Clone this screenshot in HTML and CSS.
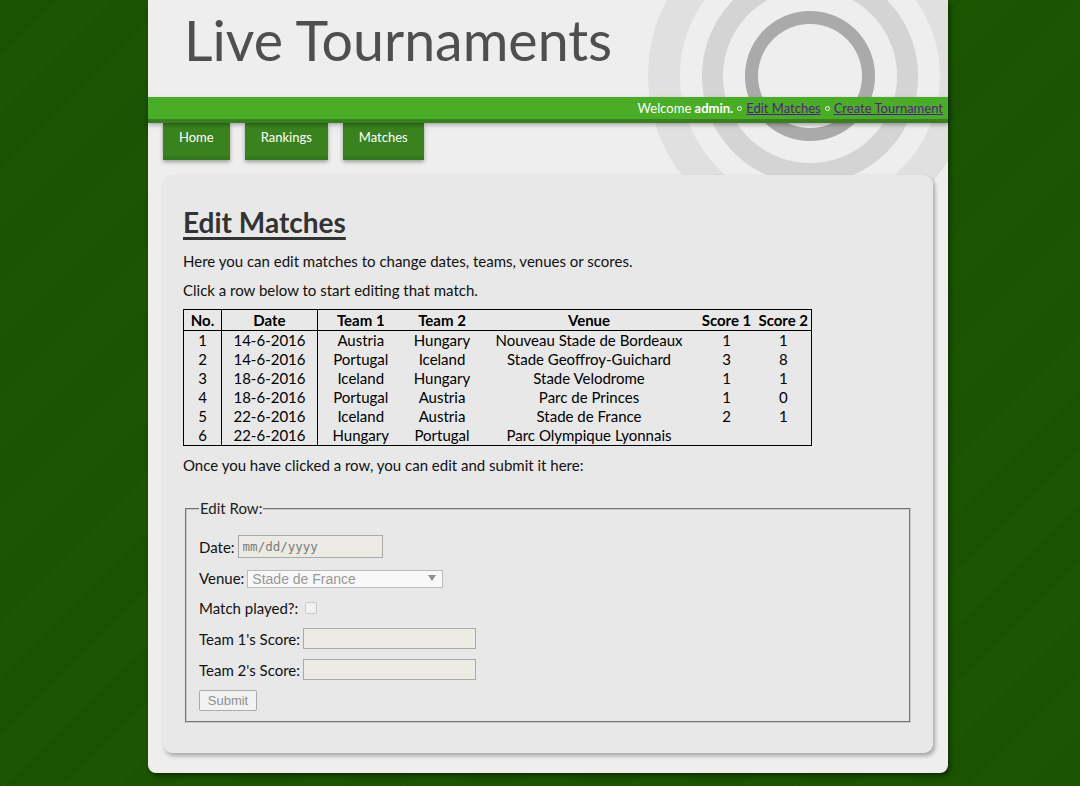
FILE: index.html
```html
<!DOCTYPE html>
<html lang="en">
<head>
<meta charset="utf-8">
<title>Live Tournaments - Edit Matches</title>
<link rel="stylesheet" href="styles.css">
</head>
<body>
<div class="page">
  <header class="masthead">
    <h1 class="site-title">Live Tournaments</h1>
  </header>
  <div class="userbar">
    <span class="welcome">Welcome <b>admin.</b></span>
    <span class="dot"></span>
    <a href="#" class="ulink">Edit Matches</a>
    <span class="dot"></span>
    <a href="#" class="ulink">Create Tournament</a>
  </div>
  <nav class="tabs">
    <a href="#" class="tab">Home</a>
    <a href="#" class="tab">Rankings</a>
    <a href="#" class="tab">Matches</a>
  </nav>
  <main class="card">
    <h2 class="heading">Edit Matches</h2>
    <p class="text">Here you can edit matches to change dates, teams, venues or scores.</p>
    <p class="text">Click a row below to start editing that match.</p>
    <table class="matches">
      <colgroup>
        <col class="c-no"><col class="c-date"><col class="c-t1"><col class="c-t2"><col class="c-venue"><col class="c-s1"><col class="c-s2">
      </colgroup>
      <thead>
        <tr><th class="sep">No.</th><th class="sep">Date</th><th>Team 1</th><th>Team 2</th><th>Venue</th><th>Score 1</th><th>Score 2</th></tr>
      </thead>
      <tbody>
        <tr><td class="sep">1</td><td class="sep">14-6-2016</td><td>Austria</td><td>Hungary</td><td>Nouveau Stade de Bordeaux</td><td>1</td><td>1</td></tr>
        <tr><td class="sep">2</td><td class="sep">14-6-2016</td><td>Portugal</td><td>Iceland</td><td>Stade Geoffroy-Guichard</td><td>3</td><td>8</td></tr>
        <tr><td class="sep">3</td><td class="sep">18-6-2016</td><td>Iceland</td><td>Hungary</td><td>Stade Velodrome</td><td>1</td><td>1</td></tr>
        <tr><td class="sep">4</td><td class="sep">18-6-2016</td><td>Portugal</td><td>Austria</td><td>Parc de Princes</td><td>1</td><td>0</td></tr>
        <tr><td class="sep">5</td><td class="sep">22-6-2016</td><td>Iceland</td><td>Austria</td><td>Stade de France</td><td>2</td><td>1</td></tr>
        <tr><td class="sep">6</td><td class="sep">22-6-2016</td><td>Hungary</td><td>Portugal</td><td>Parc Olympique Lyonnais</td><td></td><td></td></tr>
      </tbody>
    </table>
    <p class="text">Once you have clicked a row, you can edit and submit it here:</p>
    <form class="editform">
      <fieldset class="editbox">
        <legend class="legend">Edit Row:</legend>
        <div class="row row-date">
          <label class="lbl">Date:</label>
          <input class="field field-date" type="text" value="mm/dd/yyyy" disabled>
        </div>
        <div class="row row-venue">
          <label class="lbl">Venue:</label>
          <span class="selectwrap">
            <select class="field field-select" disabled>
              <option>Stade de France</option>
            </select>
          </span>
        </div>
        <div class="row row-played">
          <label class="lbl">Match played?:</label>
          <input class="check" type="checkbox" disabled>
        </div>
        <div class="row row-s1">
          <label class="lbl">Team 1's Score:</label>
          <input class="field field-score" type="text" disabled>
        </div>
        <div class="row row-s2">
          <label class="lbl">Team 2's Score:</label>
          <input class="field field-score" type="text" disabled>
        </div>
        <div class="row row-submit">
          <button class="submit" type="button" disabled>Submit</button>
        </div>
      </fieldset>
    </form>
  </main>
</div>
</body>
</html>
```
FILE: styles.css
```css
html {
  background: #1a5500;
}
body {
  margin: 0;
  min-height: 786px;
  font-family: Lato, "Liberation Sans", sans-serif;
  background: repeating-linear-gradient(135deg, #1a5400 0 40px, #1b5701 40px 80px);
}

.page {
  width: 800px;
  margin-left: 148px;
  padding-bottom: 20px;
  background-color: #eeeeee;
  background-image: radial-gradient(circle at 662px 76px,
    #eeeeee 51.5px, #aaaaaa 52.5px, #aaaaaa 64.5px, #eeeeee 65.5px,
    #eeeeee 86.5px, #d4d4d4 87.5px, #d4d4d4 107.5px, #eeeeee 108.5px,
    #eeeeee 129.5px, #e0e0e0 130.5px, #e0e0e0 161.5px, rgba(238,238,238,0) 162.5px);
  background-repeat: no-repeat;
  border-radius: 0 0 8px 8px;
  box-shadow: 2px 3px 5px rgba(0, 0, 0, 0.45);
}

.masthead {
  height: 97px;
}
.site-title {
  margin: 0;
  padding: 7px 0 0 36px;
  font-weight: 400;
  font-size: 55.5px;
  line-height: 66px;
  color: #4f4f4f;
}

.userbar {
  display: flex;
  justify-content: flex-end;
  align-items: center;
  gap: 4px;
  height: 22px;
  padding-right: 5px;
  background: #4aad26;
  border-bottom: 4px solid #3a7f1f;
  box-shadow: 0 2px 4px rgba(0, 0, 0, 0.3);
  font-size: 13px;
  position: relative;
  z-index: 2;
}
.welcome {
  color: #ffffff;
}
.welcome b {
  font-weight: 700;
}
.dot {
  width: 3px;
  height: 3px;
  border: 1.5px solid #f2f2f2;
  border-radius: 50%;
}
.ulink {
  color: #551a8b;
}

.tabs {
  display: flex;
  gap: 15px;
  padding-left: 15px;
  position: relative;
  z-index: 1;
}
.tab {
  display: block;
  height: 33px;
  line-height: 29px;
  padding: 0 16px;
  background: #3a821e;
  border-bottom: 4px solid #337a1a;
  box-shadow: 0 2px 4px rgba(0, 0, 0, 0.35);
  color: #ffffff;
  font-size: 13px;
  text-decoration: none;
}

.card {
  margin: 15px 15px 0;
  padding: 20px 20px 30px;
  background: #e8e8e8;
  border-radius: 9px;
  box-shadow: 2px 3px 4px rgba(0, 0, 0, 0.3);
  color: #111111;
}
.heading {
  margin: 10px 0 13px;
  font-size: 28px;
  line-height: 34px;
  font-weight: 700;
  color: #333333;
  text-decoration: underline;
  text-decoration-thickness: 3px;
  text-underline-offset: 4px;
}
.text {
  margin: 10px 0 9px;
  font-size: 15px;
  line-height: 19px;
}

.matches {
  width: 628px;
  table-layout: fixed;
  border-collapse: collapse;
  border: 1px solid #000000;
  font-size: 15px;
  color: #000000;
  margin: 0;
}
.c-no { width: 38px; }
.c-date { width: 96px; }
.c-t1 { width: 86px; }
.c-t2 { width: 77px; }
.c-venue { width: 217px; }
.c-s1 { width: 58px; }
.c-s2 { width: 56px; }
.matches th,
.matches td {
  padding: 0;
  height: 19px;
  line-height: 19px;
  text-align: center;
  white-space: nowrap;
}
.matches th {
  font-weight: 700;
  height: 20px;
  border-bottom: 1px solid #000000;
}
.matches .sep {
  border-right: 1px solid #000000;
}

.editform {
  margin: 24px 0 0;
}
.editbox {
  margin: 0 2px;
  padding: 0 12px 10px;
  border: 2px groove #c8c8c8;
  font-size: 15px;
}
.legend {
  padding: 0 1px;
  font-size: 15px;
  line-height: 19px;
  color: #222222;
}
.row {
  display: flex;
  align-items: center;
  gap: 3px;
}
.row-date { height: 23px; margin-top: 17px; }
.row-venue { height: 18px; margin-top: 11px; }
.row-played { height: 14px; margin-top: 14px; }
.row-s1 { height: 21px; margin-top: 13px; }
.row-s2 { height: 21px; margin-top: 10px; }
.row-submit { height: 21px; margin-top: 10px; }

.lbl {
  color: #111111;
}
.field {
  box-sizing: border-box;
  margin: 0;
  border: 1px solid #a9a9a9;
  background: #ebebe4;
  font-family: "Liberation Sans", Arial, sans-serif;
  font-size: 13px;
  color: #777777;
}
.field-date {
  width: 145px;
  height: 23px;
  padding: 0 4px;
  font-family: "DejaVu Sans Mono", "Liberation Mono", monospace;
  font-size: 12.5px;
  color: #7a7a7a;
}
.selectwrap {
  position: relative;
  display: block;
  width: 196px;
  height: 18px;
}
.selectwrap::after {
  content: "";
  position: absolute;
  right: 7px;
  top: 6px;
  border-left: 4px solid transparent;
  border-right: 4px solid transparent;
  border-top: 6px solid #8f8f8f;
}
.field-select {
  -webkit-appearance: none;
  appearance: none;
  width: 196px;
  height: 18px;
  padding: 0 0 0 4px;
  background: #ffffff;
  line-height: 16px;
  font-size: 14px;
}
.check {
  width: 12px;
  height: 12px;
  margin: 0 0 0 4px;
}
.field-score {
  width: 173px;
  height: 21px;
}
.submit {
  box-sizing: border-box;
  width: 58px;
  height: 21px;
  margin: 0;
  padding: 0;
  border: 1px solid #ababab;
  border-radius: 2px;
  background: #f2f2f2;
  color: #8f8f8f;
  font-family: "Liberation Sans", Arial, sans-serif;
  font-size: 13px;
}
```
